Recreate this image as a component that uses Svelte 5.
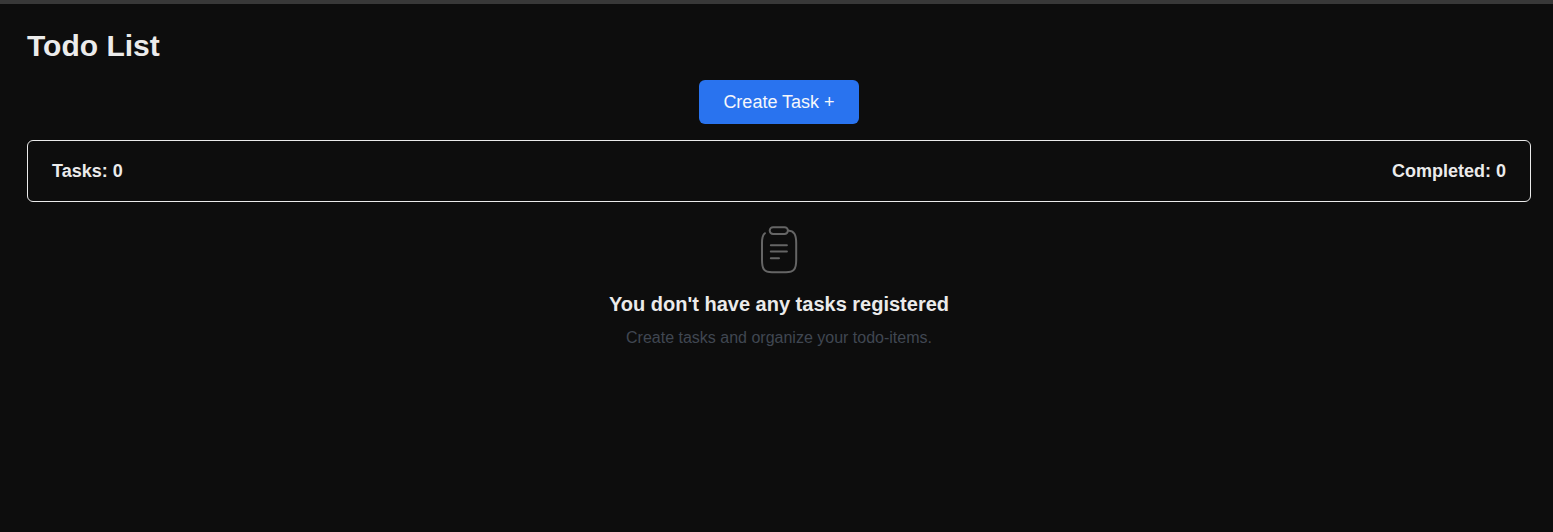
<script>
  let tasks = $state([]);
  let completed = $derived(tasks.filter((task) => task.done).length);
</script>

<main>
  <h1>Todo List</h1>
  <button type="button">Create Task +</button>
  <section class="summary">
    <span>Tasks: {tasks.length}</span>
    <span>Completed: {completed}</span>
  </section>
  <section class="empty">
    <svg width="48" height="48" viewBox="0 0 48 48" fill="none" stroke="currentColor" stroke-width="2" stroke-linecap="round" stroke-linejoin="round">
      <rect x="14.7" y="1.2" width="18.2" height="6.7" rx="3.35" />
      <path d="M9.9 7.2C7.4 9 7 11.7 7 17V34C7 43.5 9.3 46.2 17 46.2H31C38.7 46.2 41.2 43.5 41.2 34V17C41.2 8.3 39.2 5.1 33 4.6" />
      <path d="M15.8 19.2H31.9M15.8 25.5H31.9M15.8 32.2H24" />
    </svg>
    <h2>You don't have any tasks registered</h2>
    <p>Create tasks and organize your todo-items.</p>
  </section>
</main>

<style>
  :global(body) {
    margin: 0;
    background: #0d0d0d;
  }
  main {
    box-sizing: border-box;
    min-height: 532px;
    padding: 22px 22px 0 27px;
    display: flex;
    flex-direction: column;
    border-top: 4px solid #383838;
    background: #0d0d0d;
    color: #ebebeb;
    font-family: "Liberation Sans", Arial, sans-serif;
  }
  h1 {
    margin: 0 0 14px;
    font-size: 30px;
    line-height: 40px;
  }
  button {
    align-self: center;
    width: 160px;
    height: 44px;
    padding: 0;
    border: 0;
    border-radius: 6px;
    background: #2973ef;
    color: #f5f7fb;
    font: 18px/44px "Liberation Sans", Arial, sans-serif;
  }
  .summary {
    box-sizing: border-box;
    height: 62px;
    margin-top: 16px;
    padding: 0 24px;
    display: flex;
    align-items: center;
    justify-content: space-between;
    border: 1px solid #ebebeb;
    border-radius: 6px;
    font-size: 18px;
    font-weight: 700;
  }
  .empty {
    margin-top: 24px;
    display: flex;
    flex-direction: column;
    align-items: center;
  }
  svg {
    display: block;
    color: #656565;
  }
  h2 {
    margin: 16px 0 0;
    font-size: 20px;
    line-height: 28px;
  }
  p {
    margin: 8px 0 0;
    color: #404752;
    font-size: 16px;
    line-height: 24px;
  }
</style>
